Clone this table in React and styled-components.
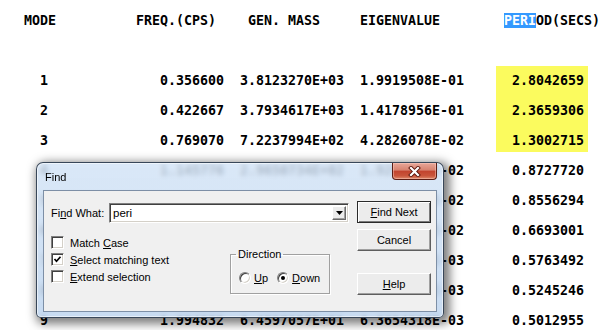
import React from 'react';
import styled, { createGlobalStyle } from 'styled-components';

const GlobalStyle = createGlobalStyle`
  html, body {
    margin: 0;
    padding: 0;
    background: #fff;
  }
  body {
    width: 611px;
    height: 330px;
    overflow: hidden;
  }
`;

const Page = styled.div`
  position: relative;
  width: 611px;
  height: 330px;
  overflow: hidden;
  background: #fff;
`;

// ---- the modal output listing ----

const Listing = styled.div`
  padding: 5px 0 0 24px;
  font-family: "DejaVu Sans Mono", "Liberation Mono", monospace;
  font-weight: bold;
  font-size: 13.29px;
  color: #000;
  white-space: pre;
`;

const Line = styled.div`
  display: flex;
  align-items: center;
  height: 30px;
`;

const Cell = styled.div`
  flex: none;
  width: ${p => p.$w * 8}px;
  text-align: ${p => (p.$right ? 'right' : 'left')};
`;

const edgeFill = {
  top: 'linear-gradient(transparent 1px, #fbfb5e 1px)',
  mid: '#fbfb5e',
  bottom: 'linear-gradient(#fbfb5e 27px, transparent 27px)',
};

const PeriodCell = styled.div`
  flex: none;
  align-self: stretch;
  display: flex;
  align-items: center;
  justify-content: flex-end;
  width: 92px;
  margin-left: 32px;
  padding-right: 4px;
  box-sizing: border-box;
  background: ${p => (p.$hl ? edgeFill[p.$hl] : 'transparent')};
`;

const Selected = styled.span`
  background: #3399ff;
  color: #fff;
`;

// ---- the Find dialog ----

const Dialog = styled.div`
  position: absolute;
  left: 36px;
  top: 162px;
  width: 408px;
  height: 156px;
  box-sizing: border-box;
  display: flex;
  flex-direction: column;
  padding: 0 6px 5px;
  border: 1px solid rgba(40, 54, 72, 0.9);
  border-radius: 7px 7px 5px 5px;
  background: linear-gradient(180deg, rgba(210, 227, 246, 0.82) 0%, rgba(192, 214, 239, 0.88) 100%);
  backdrop-filter: blur(2.5px);
  box-shadow: inset 0 0 0 1px rgba(255, 255, 255, 0.55), 3px 3px 10px 3px rgba(0, 0, 0, 0.5);
  font-family: "Liberation Sans", Arial, sans-serif;
  font-size: 11px;
  color: #000;
`;

const TitleBar = styled.div`
  display: flex;
  justify-content: space-between;
  align-items: flex-start;
  height: 27px;
  flex: none;
`;

const Title = styled.div`
  margin: 8px 0 0 2px;
  font-size: 11px;
  line-height: 13px;
`;

const CloseButton = styled.div`
  display: flex;
  align-items: center;
  justify-content: center;
  width: 45px;
  height: 17px;
  box-sizing: border-box;
  border: 1px solid #5a1d14;
  border-top: none;
  border-radius: 0 0 4px 4px;
  background: linear-gradient(180deg, #e8a799 0%, #d7826f 45%, #c2432e 50%, #c9553b 80%, #dd8a6c 100%);
  box-shadow: inset 0 0 0 1px rgba(255, 210, 200, 0.45);
`;

const Client = styled.div`
  flex: 1;
  display: flex;
  background: #f0f0f0;
  border: 1px solid #7d8fa6;
  padding: 9px 5px 0 6px;
`;

const Main = styled.div`
  flex: 1;
  display: flex;
  flex-direction: column;
`;

const FindRow = styled.div`
  display: flex;
  align-items: center;
  height: 20px;
  margin-top: 3px;
`;

const FieldLabel = styled.div`
  width: 59px;
  padding-left: 1px;
  box-sizing: border-box;
`;

const Combo = styled.div`
  display: flex;
  align-items: stretch;
  width: 240px;
  height: 20px;
  box-sizing: border-box;
  background: #fff;
  border: 1px solid;
  border-color: #808080 #fff #fff #808080;
  box-shadow: inset 1px 1px 0 #404040, inset -1px -1px 0 #d4d0c8;
  padding: 2px;
`;

const ComboText = styled.div`
  flex: 1;
  padding-left: 1px;
  line-height: 14px;
  font-size: 11.5px;
`;

const DropButton = styled.div`
  display: flex;
  align-items: center;
  justify-content: center;
  width: 14px;
  box-sizing: border-box;
  background: #ececec;
  border: 1px solid;
  border-color: #fff #6a6a6a #6a6a6a #fff;
  box-shadow: inset -1px -1px 0 #a0a0a0;
`;

const Options = styled.div`
  display: flex;
  margin-top: 11px;
`;

const CheckColumn = styled.div`
  width: 180px;
  display: flex;
  flex-direction: column;
`;

const CheckRow = styled.div`
  display: flex;
  align-items: center;
  height: 17px;
  gap: 6px;
  padding-left: 1px;
`;

const CheckBox = styled.div`
  display: flex;
  align-items: center;
  justify-content: center;
  width: 13px;
  height: 13px;
  box-sizing: border-box;
  background: #fff;
  border: 1px solid;
  border-color: #808080 #fff #fff #808080;
  box-shadow: inset 1px 1px 0 #404040, inset -1px -1px 0 #d4d0c8;
`;

const GroupBox = styled.fieldset`
  margin: 14px 0 0;
  width: 100px;
  height: 46px;
  box-sizing: border-box;
  padding: 10px 0 0 8px;
  border: 1px solid #a0a0a0;
  box-shadow: inset 1px 1px 0 #fff, 1px 1px 0 #fff;
`;

const Legend = styled.legend`
  margin-left: -3px;
  padding: 0 2px;
  line-height: 13px;
`;

const RadioRow = styled.div`
  display: flex;
  align-items: center;
  height: 14px;
`;

const Option = styled.div`
  display: flex;
  align-items: center;
  gap: 3px;
  margin-right: ${p => (p.$last ? 0 : 9)}px;
`;

const Radio = styled.div`
  display: flex;
  align-items: center;
  justify-content: center;
  width: 12px;
  height: 12px;
  box-sizing: border-box;
  border-radius: 50%;
  background: #fff;
  border: 1px solid;
  border-color: #808080 #fff #fff #808080;
  box-shadow: inset 1px 1px 0 #404040, inset -1px -1px 0 #d4d0c8;

  &::after {
    content: '';
    display: ${p => (p.$on ? 'block' : 'none')};
    width: 4px;
    height: 4px;
    border-radius: 50%;
    background: #000;
  }
`;

const ButtonColumn = styled.div`
  width: 74px;
  flex: none;
  display: flex;
  flex-direction: column;
`;

const Button = styled.div`
  display: flex;
  align-items: center;
  justify-content: center;
  height: 22px;
  margin-top: ${p => p.$gap || 0}px;
  box-sizing: border-box;
  background: #ececec;
  border: 1px solid;
  border-color: ${p => (p.$default ? '#2a2a2a' : '#fff #5e5e5e #5e5e5e #fff')};
  box-shadow: ${p =>
    p.$default
      ? 'inset 1px 1px 0 #fff, inset -1px -1px 0 #7a7a7a'
      : 'inset -1px -1px 0 #a0a0a0'};
  font-size: 11px;
`;

const Key = styled.span`
  text-decoration: underline;
  text-underline-offset: 1px;
`;

const CloseIcon = () => (
  <svg width="13" height="11" viewBox="0 0 13 11">
    <path d="M3 2 L10 9 M10 2 L3 9" stroke="#5b150b" strokeWidth="4" strokeLinecap="square" />
    <path d="M3 2 L10 9 M10 2 L3 9" stroke="#fff" strokeWidth="2.2" strokeLinecap="square" />
  </svg>
);

const Tick = () => (
  <svg width="9" height="9" viewBox="0 0 9 9">
    <path d="M1.5 4 L3.5 6.2 L7.5 1.8" fill="none" stroke="#000" strokeWidth="1.7" />
  </svg>
);

const Arrow = () => (
  <svg width="7" height="4" viewBox="0 0 7 4">
    <path d="M0 0 H7 L3.5 4 Z" fill="#000" />
  </svg>
);

const rows = [
  ['1', '0.356600', '3.8123270E+03', '1.9919508E-01', '2.8042659', 'top'],
  ['2', '0.422667', '3.7934617E+03', '1.4178956E-01', '2.3659306', 'mid'],
  ['3', '0.769070', '7.2237994E+02', '4.2826078E-02', '1.3002715', 'bottom'],
  ['4', '1.145776', '2.9650734E+02', '1.9294857E-02', '0.8727720'],
  ['5', '1.168731', '1.5387412E+03', '1.8544273E-02', '0.8556294'],
  ['6', '1.494098', '9.4215688E+02', '1.1346865E-02', '0.6693001'],
  ['7', '1.735061', '3.1478265E+02', '8.4142257E-03', '0.5763492'],
  ['8', '1.906488', '5.0683617E+02', '6.9690513E-03', '0.5245246'],
  ['9', '1.994832', '6.4597057E+01', '6.3654318E-03', '0.5012955'],
];

export default function App() {
  return (
    <Page>
      <GlobalStyle />
      <Listing>
        <Line>
          <Cell $w={14}>MODE</Cell>
          <Cell $w={14}>FREQ.(CPS)</Cell>
          <Cell $w={14}>GEN. MASS</Cell>
          <Cell $w={18}>EIGENVALUE</Cell>
          <Cell $w={12}><Selected>PERI</Selected>OD(SECS)</Cell>
        </Line>
        <Line />
        {rows.map((r) => (
          <Line key={r[0]}>
            <Cell $w={3} $right>{r[0]}</Cell>
            <Cell $w={22} $right>{r[1]}</Cell>
            <Cell $w={15} $right>{r[2]}</Cell>
            <Cell $w={15} $right>{r[3]}</Cell>
            <PeriodCell $hl={r[5]}>{r[4]}</PeriodCell>
          </Line>
        ))}
      </Listing>

      <Dialog>
        <TitleBar>
          <Title>Find</Title>
          <CloseButton><CloseIcon /></CloseButton>
        </TitleBar>
        <Client>
          <Main>
            <FindRow>
              <FieldLabel>Fi<Key>n</Key>d What:</FieldLabel>
              <Combo>
                <ComboText>peri</ComboText>
                <DropButton><Arrow /></DropButton>
              </Combo>
            </FindRow>
            <Options>
              <CheckColumn>
                <CheckRow><CheckBox /><span>Match <Key>C</Key>ase</span></CheckRow>
                <CheckRow><CheckBox><Tick /></CheckBox><span><Key>S</Key>elect matching text</span></CheckRow>
                <CheckRow><CheckBox /><span><Key>E</Key>xtend selection</span></CheckRow>
              </CheckColumn>
              <GroupBox>
                <Legend>Direction</Legend>
                <RadioRow>
                  <Option><Radio /><span><Key>U</Key>p</span></Option>
                  <Option $last><Radio $on /><span><Key>D</Key>own</span></Option>
                </RadioRow>
              </GroupBox>
            </Options>
          </Main>
          <ButtonColumn>
            <Button $default $gap={1}><span><Key>F</Key>ind Next</span></Button>
            <Button $gap={6}>Cancel</Button>
            <Button $gap={22}><span><Key>H</Key>elp</span></Button>
          </ButtonColumn>
        </Client>
      </Dialog>
    </Page>
  );
}
